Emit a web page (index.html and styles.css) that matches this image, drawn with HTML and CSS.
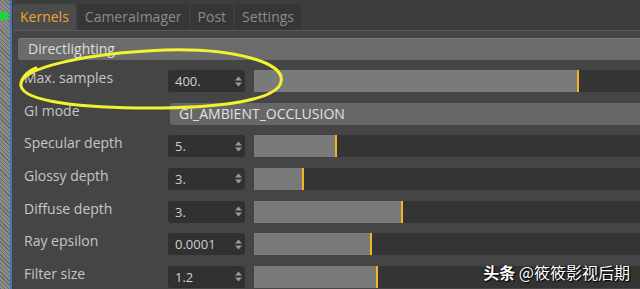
FILE: index.html
```html
<!DOCTYPE html>
<html>
<head>
<meta charset="utf-8">
<link rel="stylesheet" href="styles.css">
</head>
<body>
<div class="app">
  <div class="side"><div class="marker"></div></div>
  <div class="panel">
    <div class="tabbar">
      <div class="tab active">Kernels</div>
      <div class="tab">CameraImager</div>
      <div class="tab">Post</div>
      <div class="tab">Settings</div>
    </div>
    <div class="content">
      <div class="group">Directlighting</div>
      <div class="rows">
        <div class="row">
          <span class="label">Max. samples</span>
          <div class="num"><span>400.</span><svg class="spin" viewBox="0 0 7 11"><path d="M0 4.5L3.5 0.5L7 4.5Z M0 6.5L3.5 10.5L7 6.5Z"/></svg></div>
          <div class="slider"><div class="fill" style="width:325px"></div></div>
        </div>
        <div class="row">
          <span class="label">GI mode</span>
          <div class="dropdown">GI_AMBIENT_OCCLUSION</div>
        </div>
        <div class="row">
          <span class="label">Specular depth</span>
          <div class="num"><span>5.</span><svg class="spin" viewBox="0 0 7 11"><path d="M0 4.5L3.5 0.5L7 4.5Z M0 6.5L3.5 10.5L7 6.5Z"/></svg></div>
          <div class="slider"><div class="fill" style="width:83px"></div></div>
        </div>
        <div class="row">
          <span class="label">Glossy depth</span>
          <div class="num"><span>3.</span><svg class="spin" viewBox="0 0 7 11"><path d="M0 4.5L3.5 0.5L7 4.5Z M0 6.5L3.5 10.5L7 6.5Z"/></svg></div>
          <div class="slider"><div class="fill" style="width:50px"></div></div>
        </div>
        <div class="row">
          <span class="label">Diffuse depth</span>
          <div class="num"><span>3.</span><svg class="spin" viewBox="0 0 7 11"><path d="M0 4.5L3.5 0.5L7 4.5Z M0 6.5L3.5 10.5L7 6.5Z"/></svg></div>
          <div class="slider"><div class="fill" style="width:149px"></div></div>
        </div>
        <div class="row">
          <span class="label">Ray epsilon</span>
          <div class="num"><span>0.0001</span><svg class="spin" viewBox="0 0 7 11"><path d="M0 4.5L3.5 0.5L7 4.5Z M0 6.5L3.5 10.5L7 6.5Z"/></svg></div>
          <div class="slider"><div class="fill" style="width:118px"></div></div>
        </div>
        <div class="row">
          <span class="label">Filter size</span>
          <div class="num"><span>1.2</span><svg class="spin" viewBox="0 0 7 11"><path d="M0 4.5L3.5 0.5L7 4.5Z M0 6.5L3.5 10.5L7 6.5Z"/></svg></div>
          <div class="slider"><div class="fill" style="width:124px"></div></div>
        </div>
      </div>
    </div>
  </div>
</div>
<svg class="circle" viewBox="0 0 640 289"><path d="M21 86 C 16 68, 88 53, 165 50 C 232 48, 286 62, 281 82 C 277 100, 222 108, 150 108 C 84 108, 24 102, 21 86 C 20 80, 26 72, 36 68"/></svg>
<div class="watermark"><b>头条</b> @筱筱影视后期</div>
</body>
</html>
```
FILE: styles.css
```css
html, body {
  margin: 0;
  padding: 0;
}
body {
  width: 640px;
  height: 289px;
  overflow: hidden;
  position: relative;
  background: #444444;
  font-family: "Open Sans", "Noto Sans", sans-serif;
}
.app {
  display: flex;
  height: 289px;
}
.side {
  flex: none;
  width: 10px;
  background: repeating-linear-gradient(45deg, #6a6a6a 0 1px, #8c8c8c 1px 3px);
  border-right: 2px solid #3f76b8;
}
.marker {
  width: 8px;
  height: 8px;
  margin-top: 12px;
  background: #1fd63a;
}
.panel {
  flex: 1;
  min-width: 0;
  overflow: hidden;
  background: #454545;
}
.tabbar {
  display: flex;
  gap: 2px;
  height: 26px;
  padding: 4px 0 0 1px;
  background: #3d3d3d;
  border-bottom: 1px solid #595959;
}
.tab {
  padding: 0 7px;
  background: #363636;
  color: #8b8b8b;
  font-size: 14px;
  line-height: 26px;
  border-radius: 3px 3px 0 0;
}
.tab.active {
  background: #4b4b4b;
  color: #f2a331;
}
.content {
  padding: 7px 0 0 6px;
}
.group {
  box-sizing: border-box;
  height: 22px;
  padding-left: 10px;
  background: #6b6b6b;
  border-top: 1px solid #7c7c7c;
  border-radius: 3px 0 0 3px;
  color: #dedede;
  font-size: 14px;
  line-height: 20px;
}
.rows {
  display: flex;
  flex-direction: column;
  gap: 10.67px;
  margin-top: 10px;
  padding-left: 6px;
}
.row {
  display: flex;
  align-items: center;
  height: 22px;
}
.label {
  flex: none;
  width: 144px;
  position: relative;
  top: -3px;
  color: #c6c6c6;
  font-size: 14px;
  line-height: 22px;
}
.num {
  flex: none;
  box-sizing: border-box;
  width: 77px;
  height: 22px;
  display: flex;
  align-items: center;
  justify-content: space-between;
  padding: 0 3px 0 7px;
  background: #313131;
  border-radius: 3px;
  color: #cfcfcf;
  font-size: 13px;
}
.spin {
  width: 7px;
  height: 11px;
  fill: #9a9a9a;
}
.slider {
  flex: 1;
  height: 22px;
  margin-left: 9px;
  background: #343434;
}
.fill {
  box-sizing: border-box;
  height: 100%;
  background: #7a7a7a;
  border-right: 2px solid #f3b324;
}
.dropdown {
  flex: 1;
  box-sizing: border-box;
  height: 22px;
  margin-left: 2px;
  padding-left: 9px;
  background: #676767;
  border-radius: 3px 0 0 3px;
  color: #e2e2e2;
  font-size: 14px;
  line-height: 22px;
}
.circle {
  position: absolute;
  left: 0;
  top: 0;
  width: 640px;
  height: 289px;
  fill: none;
  stroke: #f2f232;
  stroke-width: 3;
  stroke-linecap: round;
  pointer-events: none;
}
.watermark {
  position: absolute;
  right: 10px;
  bottom: 7px;
  color: #ffffff;
  font-family: "Noto Sans CJK SC", sans-serif;
  font-size: 16px;
  line-height: 20px;
  text-shadow: 0 0 2px #000, 1px 1px 1px #000;
}
.watermark b {
  font-weight: 700;
}
```
